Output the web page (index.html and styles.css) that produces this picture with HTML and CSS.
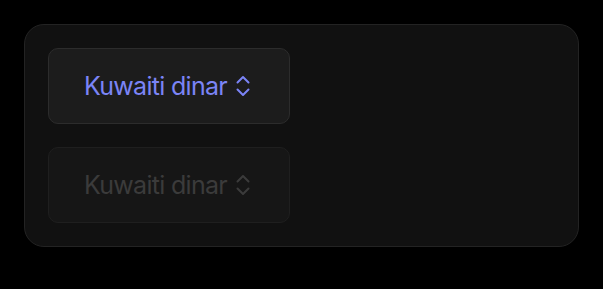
FILE: index.html
```html
<!DOCTYPE html>
<html>
<head>
<meta charset="utf-8">
<link rel="stylesheet" href="styles.css">
</head>
<body>
<div class="panel">
  <button class="select">
    <span class="label">Kuwaiti dinar</span>
    <svg class="chev" width="14" height="22" viewBox="0 0 14 22"><path d="M1.5 7.5 L7 2 L12.5 7.5 M1.5 14.5 L7 20 L12.5 14.5" fill="none" stroke="currentColor" stroke-width="2" stroke-linecap="round" stroke-linejoin="round"/></svg>
  </button>
  <button class="select disabled" disabled>
    <span class="label">Kuwaiti dinar</span>
    <svg class="chev" width="14" height="22" viewBox="0 0 14 22"><path d="M1.5 7.5 L7 2 L12.5 7.5 M1.5 14.5 L7 20 L12.5 14.5" fill="none" stroke="currentColor" stroke-width="2" stroke-linecap="round" stroke-linejoin="round"/></svg>
  </button>
</div>
</body>
</html>
```
FILE: styles.css
```css
html, body {
  margin: 0;
  background: #000;
}
body {
  padding: 24px;
  font-family: Inter, "Noto Sans", sans-serif;
}
.panel {
  box-sizing: border-box;
  width: 555px;
  height: 223px;
  background: #111111;
  border: 1px solid #232323;
  border-radius: 20px;
  padding: 23px;
  display: flex;
  flex-direction: column;
  gap: 23px;
  align-items: flex-start;
}
.select {
  box-sizing: border-box;
  width: 242px;
  height: 76px;
  background: #1c1c1c;
  border: 1px solid #2c2c2c;
  border-radius: 10px;
  display: flex;
  align-items: center;
  justify-content: center;
  gap: 9px;
  color: #7b84f6;
  font-family: inherit;
  font-size: 25px;
  padding: 0 4px 0 0;
}
.label {
  letter-spacing: -0.7px;
}
.chev {
  display: block;
  margin-top: -1px;
}
.select.disabled {
  background: #161616;
  border-color: #1f1f1f;
  color: #3b3b3b;
}
```
